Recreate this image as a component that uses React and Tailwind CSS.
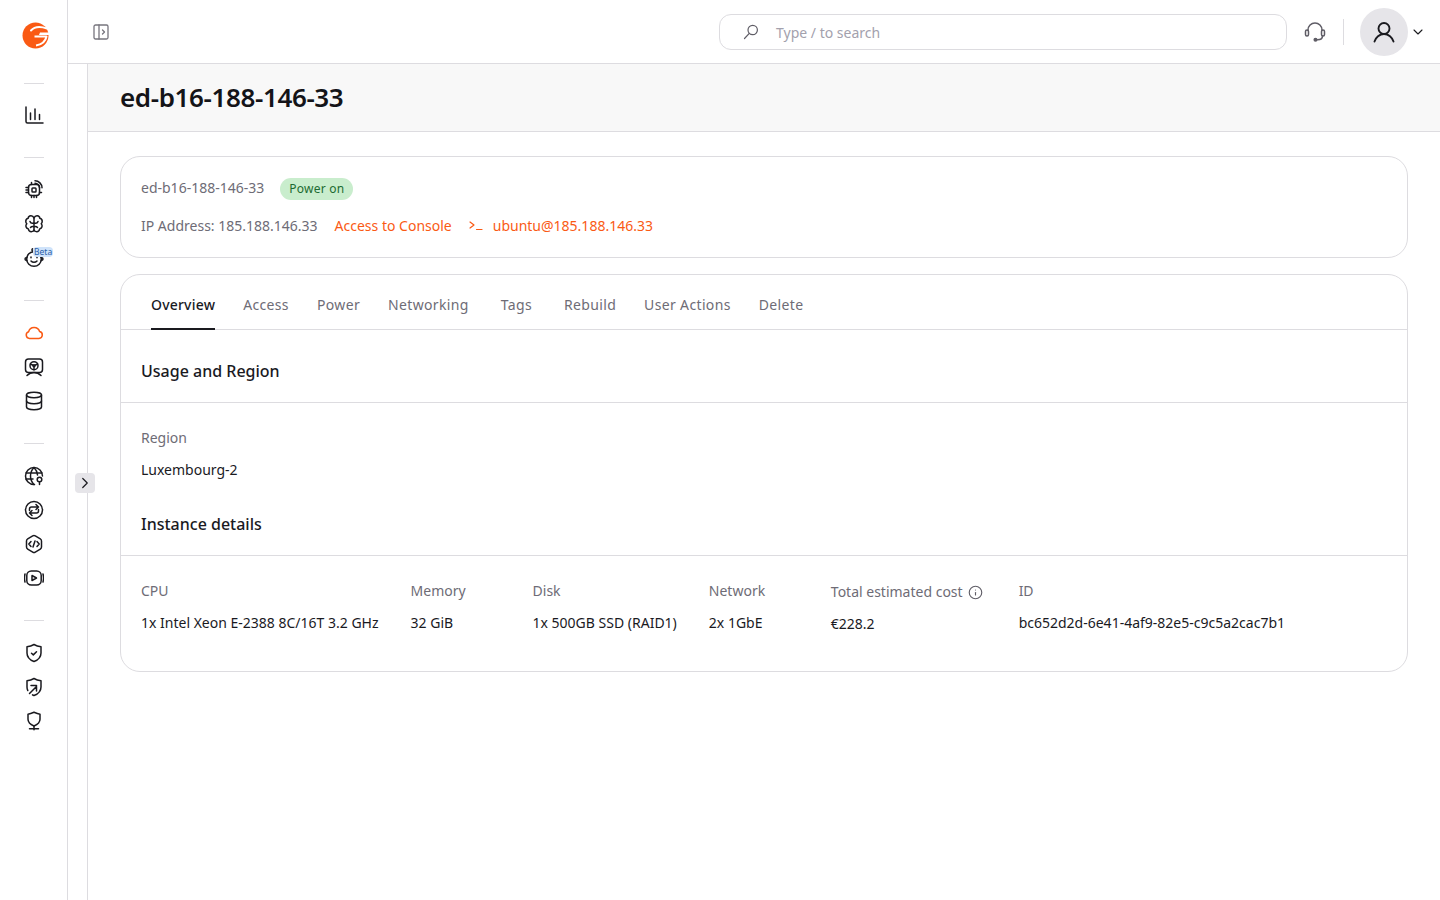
import React from "react";
import { ChevronDown, ChevronRight, Info } from "lucide-react";

const Svg = ({ children, size = 20, className = "" }) => (
  <svg
    width={size}
    height={size}
    viewBox="0 0 20 20"
    fill="none"
    stroke="currentColor"
    strokeWidth="1.5"
    strokeLinecap="round"
    strokeLinejoin="round"
    className={className}
  >
    {children}
  </svg>
);

const Logo = () => (
  <svg width="28" height="30" viewBox="0 0 28 30" fill="none">
    <circle cx="13.5" cy="15.5" r="13" fill="#fa5a14" />
    <path d="M9 10.500C12 7 18 6 25 8.500" stroke="#fff" strokeWidth="2" strokeLinecap="round" />
    <path d="M15 2.200C20 1.500 24 3.500 27 7.500L28 1H15z" fill="#fff" />
    <path d="M12.500 16.500H24.500C23.500 21.500 20 24.500 14 25.500" stroke="#fff" strokeWidth="2" strokeLinejoin="round" />
    <path d="M18 12.500H27V15H17z" fill="#fff" />
  </svg>
);

const ChartIcon = () => (
  <Svg>
    <path d="M2 2v14.500a1.500 1.500 0 0 0 1.500 1.500H19" />
    <path d="M6.500 14.500V8M11 14.500V4M15.500 14.500v-5" />
  </Svg>
);

const ChipIcon = () => (
  <Svg>
    <rect x="4.500" y="5.500" width="11" height="11" rx="3" />
    <rect x="8" y="9" width="4" height="4" rx=".8" />
    <path d="M2 8.500h2.500M2 11h2.500M2 13.500h2.500M7.500 16.500v2M10 16.500v2M12.500 16.500v2M15.500 13.500h2M7.500 5.500V3.500" />
    <path d="M11 1.800c3.800 0 7 3.200 7 7M11 4.300c2.400 0 4.500 2 4.500 4.500" />
  </Svg>
);

const BrainIcon = () => (
  <Svg>
    <path d="M10 4v13M10 4c-.6-1.500-1.800-2.300-3.200-2.200C5.200 1.900 4.300 3 4.200 4.300 2.700 4.700 1.700 6 1.800 7.500c0 .9.400 1.700 1 2.300-.8.800-1.100 1.900-.8 3 .3 1.200 1.300 2 2.400 2.200.2 1.500 1.400 2.700 2.900 2.700 1.200 0 2.200-.6 2.700-1.700" />
    <path d="M10 4c.6-1.500 1.800-2.300 3.200-2.200 1.600.1 2.500 1.200 2.600 2.500 1.500.4 2.500 1.700 2.400 3.200 0 .9-.4 1.700-1 2.300.8.800 1.100 1.900.8 3-.3 1.200-1.300 2-2.400 2.200-.2 1.500-1.400 2.700-2.900 2.700-1.200 0-2.200-.6-2.700-1.700" />
    <path d="M6 7.500c.5 1.500 2.300 2 4 1.500M14 7.500c-.5 1.500-2.300 2-4 1.500M6.500 13.500c.8-1 2.200-1.300 3.500-.8M13.500 13.500c-.8-1-2.200-1.300-3.500-.8" />
  </Svg>
);

const BotIcon = () => (
  <Svg>
    <circle cx="10" cy="11" r="7.300" />
    <path d="M10 3.700C8 3.200 7.500 2 8.500.8M2.700 9.500c-1.100.2-1.700.8-1.700 1.500s.6 1.300 1.700 1.500M17.300 9.500c1.100.2 1.700.8 1.700 1.500s-.6 1.300-1.700 1.500" />
    <path d="M7 9v.8M13 9v.8M7 13c1.600 1.800 4.400 1.800 6 0" />
  </Svg>
);

const CloudIcon = () => (
  <Svg>
    <path d="M5.500 15.500h9.500a3.500 3.500 0 0 0 .6-6.900A5.700 5.700 0 0 0 10 4.500a5.700 5.700 0 0 0-5.400 4.200 3.500 3.500 0 0 0 .9 6.800z" />
  </Svg>
);

const MonitorIcon = () => (
  <Svg>
    <rect x="1.500" y="2" width="17" height="13.500" rx="3" />
    <circle cx="10" cy="8.700" r="4" />
    <circle cx="10" cy="8.700" r="1" />
    <path d="M10 9.700v3M9.100 8.200 6.400 7M10.900 8.200 13.600 7M3 18.500c2-2 4-3 7-3s5 1 7 3" />
  </Svg>
);

const DbIcon = () => (
  <Svg>
    <ellipse cx="10" cy="4" rx="7.500" ry="2.700" />
    <path d="M2.500 4v12c0 1.500 3.400 2.700 7.500 2.700s7.500-1.200 7.500-2.700V4" />
    <path d="M2.500 10c0 1.500 3.400 2.700 7.500 2.700s7.500-1.200 7.500-2.700" />
  </Svg>
);

const GlobeIcon = () => (
  <Svg>
    <path d="M10.500 18.500H10a8.500 8.500 0 1 1 8.500-8.500" />
    <path d="M10 1.500C7.500 4 6.500 7 6.500 10s1 6 3.500 8.500M10 1.500C12 3.500 13.300 6 13.500 9M2 7h16M2 13h7" />
    <circle cx="15.500" cy="13.500" r="2.300" />
    <path d="M15.500 15.800v2.700" />
  </Svg>
);

const SwapIcon = () => (
  <Svg>
    <circle cx="10" cy="10" r="8.500" />
    <path d="M5.500 10.500V9a2 2 0 0 1 2-2h7M12 4.500 14.500 7 12 9.500" />
    <path d="M14.500 9.500V11a2 2 0 0 1-2 2h-7M8 10.500 5.500 13 8 15.500" />
  </Svg>
);

const CodeIcon = () => (
  <Svg>
    <path d="M8.700 1.900a2.500 2.500 0 0 1 2.600 0l5 2.900a2.500 2.500 0 0 1 1.200 2.100v6.200a2.500 2.500 0 0 1-1.200 2.100l-5 2.900a2.500 2.500 0 0 1-2.600 0l-5-2.900a2.500 2.500 0 0 1-1.200-2.100V6.900a2.500 2.500 0 0 1 1.200-2.100z" />
    <path d="M7 7.500 4.800 10 7 12.500M13 7.500l2.200 2.500-2.200 2.500M11 7l-2 6" />
  </Svg>
);

const PlayIcon = () => (
  <Svg>
    <rect x="2.800" y="3" width="14.400" height="14" rx="4.500" />
    <path d="M1 6c-.7 2.700-.7 5.300 0 8M19 6c.7 2.700.7 5.300 0 8" />
    <path d="M8 7.500v5l4.500-2.500z" />
  </Svg>
);

const ShieldCheckIcon = () => (
  <Svg>
    <path d="M10 1.500c2 1.200 4.500 2 7 2.300v6.200c0 4-3 7-7 8.500-4-1.500-7-4.500-7-8.500V3.800c2.500-.3 5-1.100 7-2.300z" />
    <path d="M7.500 10.300l1.800 1.600 3.200-3.200" />
  </Svg>
);

const ShieldArrowIcon = () => (
  <Svg>
    <path d="M3.800 13.500C3.200 12.500 3 11.200 3 10V3.800c2.500-.3 5-1.100 7-2.300 2 1.200 4.500 2 7 2.300V10c0 4-3 7-7 8.500-.6-.2-1-.4-1.500-.7" />
    <path d="M5.500 16.500l7-7M7 8.500h5.500V14" />
  </Svg>
);

const BulbIcon = () => (
  <Svg>
    <path d="M10 1.200c2.200 1 4 1.700 6 2v5c0 3-2.500 5.300-6 6.800-3.500-1.500-6-3.800-6-6.800v-5c2-.3 3.800-1 6-2z" />
    <path d="M10 15v3.800M5.500 17.800h9" />
  </Svg>
);

const PanelIcon = () => (
  <svg width="16" height="16" viewBox="0 0 16 16" fill="none" stroke="#77757e" strokeWidth="1.300" strokeLinecap="round" strokeLinejoin="round">
    <rect x="1" y="1" width="14" height="14" rx="1.500" />
    <path d="M6 1v14M9.500 6l2 2-2 2" />
  </svg>
);

const SearchIcon = () => (
  <svg width="16" height="16" viewBox="0 0 16 16" fill="none" stroke="#5f5d66" strokeWidth="1.200" strokeLinecap="round">
    <circle cx="9.700" cy="6" r="4.700" />
    <path d="M6.300 9.400 1.500 14.500" />
  </svg>
);

const HeadsetIcon = () => (
  <svg width="22" height="22" viewBox="0 0 22 22" fill="none" stroke="#5f5d66" strokeWidth="1.500" strokeLinecap="round" strokeLinejoin="round">
    <path d="M4 9.500V9a7 7 0 0 1 14 0v.5" />
    <rect x="1.500" y="9" width="3" height="6" rx="1.500" />
    <rect x="17.500" y="9" width="3" height="6" rx="1.500" />
    <path d="M18.500 15c0 2.500-2 3.800-5 3.800" />
    <circle cx="11.500" cy="18.800" r="1.300" fill="#5f5d66" />
  </svg>
);

const UserIcon = () => (
  <svg width="24" height="24" viewBox="0 0 24 24" fill="none" stroke="#1a1a1f" strokeWidth="1.900" strokeLinecap="round" strokeLinejoin="round">
    <circle cx="12" cy="8.500" r="5.500" />
    <path d="M2.500 21.500c1.200-4 5-7.500 9.500-7.500s8.300 3.500 9.500 7.500" />
  </svg>
);

const TerminalIcon = () => (
  <svg width="16" height="16" viewBox="0 0 16 16" fill="none" stroke="#fa5a14" strokeWidth="1.200" strokeLinecap="round" strokeLinejoin="round">
    <path d="M2 4l4 3-4 3M8.500 11.500H14" />
  </svg>
);

const NavIcon = ({ children, className = "text-[#1a1a1f]" }) => (
  <div className={`relative flex h-[34px] w-full items-center justify-center ${className}`}>{children}</div>
);

const Divider = ({ className = "" }) => <div className={`h-px w-5 bg-[#dddce0] ${className}`} />;

const Sidebar = () => (
  <aside className="flex w-[68px] shrink-0 flex-col items-center border-r border-[#dddce0]">
    <div className="flex h-[70px] w-full items-center justify-center pl-1">
      <Logo />
    </div>
    <Divider className="mt-[13px] mb-3.5" />
    <NavIcon><ChartIcon /></NavIcon>
    <Divider className="mt-[25px] mb-3.5" />
    <NavIcon><ChipIcon /></NavIcon>
    <div className="h-px w-full" />
    <NavIcon><BrainIcon /></NavIcon>
    <NavIcon>
      <BotIcon />
      <span className="absolute top-1.5 left-[33px] rounded-[4px] bg-[#cfe3fa] px-px text-[8.5px] leading-[10px] text-[#2b5fa8]">Beta</span>
    </NavIcon>
    <Divider className="mt-[25px] mb-[15px]" />
    <NavIcon className="text-[#fa5a14]"><CloudIcon /></NavIcon>
    <NavIcon><MonitorIcon /></NavIcon>
    <NavIcon><DbIcon /></NavIcon>
    <Divider className="mt-[25px] mb-[15px]" />
    <NavIcon><GlobeIcon /></NavIcon>
    <NavIcon><SwapIcon /></NavIcon>
    <NavIcon><CodeIcon /></NavIcon>
    <NavIcon><PlayIcon /></NavIcon>
    <Divider className="mt-[25px] mb-[15px]" />
    <NavIcon><ShieldCheckIcon /></NavIcon>
    <NavIcon><ShieldArrowIcon /></NavIcon>
    <NavIcon><BulbIcon /></NavIcon>
  </aside>
);

const Header = () => (
  <header className="flex h-16 shrink-0 items-center border-b border-[#dddce0] pr-3.5 pl-[25px]">
    <PanelIcon />
    <div className="ml-auto flex h-9 w-[568px] items-center rounded-xl border border-[#dddce0] pl-[23px]">
      <SearchIcon />
      <span className="ml-[17px] pt-0.5 text-sm text-[#a3a1ad]">Type / to search</span>
    </div>
    <div className="ml-[17px]">
      <HeadsetIcon />
    </div>
    <div className="mr-4 ml-[17px] h-[26px] w-px bg-[#dddce0]" />
    <div className="flex h-12 w-12 items-center justify-center rounded-full bg-[#e6e5e9]">
      <UserIcon />
    </div>
    <ChevronDown size={16} strokeWidth={1.6} className="ml-0.5 text-[#1a1a1f]" />
  </header>
);

const tabs = [
  { label: "Overview", active: true, cls: "mr-7" },
  { label: "Access", cls: "mr-7" },
  { label: "Power", cls: "mr-7" },
  { label: "Networking", cls: "mr-8" },
  { label: "Tags", cls: "mr-8" },
  { label: "Rebuild", cls: "mr-7" },
  { label: "User Actions", cls: "mr-7" },
  { label: "Delete", cls: "" },
];

const details = [
  { label: "CPU", value: "1x Intel Xeon E-2388 8C/16T 3.2 GHz", cls: "" },
  { label: "Memory", value: "32 GiB", cls: "min-w-[90px]" },
  { label: "Disk", value: "1x 500GB SSD (RAID1)", cls: "" },
  { label: "Network", value: "2x 1GbE", cls: "min-w-[90px]" },
  { label: "Total estimated cost", value: "€228.2", info: true, cls: "mr-1 pt-px" },
  { label: "ID", value: "bc652d2d-6e41-4af9-82e5-c9c5a2cac7b1", cls: "" },
];

export default function App() {
  return (
    <div className="flex min-h-screen bg-white font-['Noto_Sans',sans-serif] text-[#1a1a1f]">
      <Sidebar />
      <div className="relative flex min-w-0 flex-1 flex-col">
        <Header />
        <div className="flex flex-1">
          <div className="w-5 shrink-0 border-r border-[#dddce0]" />
          <main className="min-w-0 flex-1">
            <div className="flex h-[68px] items-center border-b border-[#dddce0] bg-[#f8f8f8] pl-8">
              <h1 className="text-[26px] font-semibold tracking-[-0.38px] text-[#141418]">ed-b16-188-146-33</h1>
            </div>
            <div className="flex flex-col gap-4 px-8 pt-6">
              <section className="flex h-[102px] flex-col rounded-[20px] border border-[#dddce0] px-5 pt-[19px]">
                <div className="flex h-6 items-center">
                  <span className="text-sm text-[#6e6c76]">ed-b16-188-146-33</span>
                  <span className="mt-px ml-4 flex h-[22px] items-center rounded-full bg-[#c9edcd] px-[9px] text-xs tracking-[0.25px] text-[#1c6b31]">Power on</span>
                </div>
                <div className="mt-[14px] flex h-6 items-center text-sm">
                  <span className="text-[#6e6c76]">IP Address: 185.188.146.33</span>
                  <span className="ml-[17px] text-[#fa5a14]">Access to Console</span>
                  <span className="ml-4"><TerminalIcon /></span>
                  <span className="ml-[9px] text-[#fa5a14]">ubuntu@185.188.146.33</span>
                </div>
              </section>
              <section className="flex h-[398px] flex-col rounded-[20px] border border-[#dddce0]">
                <nav className="flex h-[55px] shrink-0 border-b border-[#dddce0] pl-[30px]">
                  {tabs.map((t) => (
                    <div
                      key={t.label}
                      className={`flex h-[55px] items-center text-sm ${t.cls} ${
                        t.active
                          ? "border-b-2 border-[#1a1a1f] pt-1.5 font-medium tracking-[0.2px] text-[#1a1a1f]"
                          : "pt-1 tracking-[0.35px] text-[#6e6c76]"
                      }`}
                    >
                      {t.label}
                    </div>
                  ))}
                </nav>
                <h2 className="flex h-[73px] shrink-0 items-center border-b border-[#dddce0] px-5 pt-2.5 text-base font-medium">Usage and Region</h2>
                <div className="flex flex-col gap-2.5 px-5 pt-6">
                  <span className="text-sm leading-[22px] text-[#6e6c76]">Region</span>
                  <span className="text-sm leading-[22px]">Luxembourg-2</span>
                </div>
                <h2 className="mt-[15px] flex h-[60px] shrink-0 items-center border-b border-[#dddce0] px-5 pb-1 text-base font-medium">Instance details</h2>
                <div className="flex gap-8 px-5 pt-6">
                  {details.map((d) => (
                    <div key={d.label} className={`flex flex-col gap-2.5 ${d.cls}`}>
                      <span className="flex items-center gap-[5px] text-sm leading-[22px] text-[#6e6c76]">
                        {d.label}
                        {d.info && <Info size={15} strokeWidth={1.8} className="text-[#5f5d66]" />}
                      </span>
                      <span className="text-sm leading-[22px]">{d.value}</span>
                    </div>
                  ))}
                </div>
              </section>
            </div>
          </main>
        </div>
        <button className="absolute top-[473px] left-[7px] flex h-5 w-5 items-center justify-center rounded bg-[#e6e5e9]">
          <ChevronRight size={18} strokeWidth={1.6} />
        </button>
      </div>
    </div>
  );
}
